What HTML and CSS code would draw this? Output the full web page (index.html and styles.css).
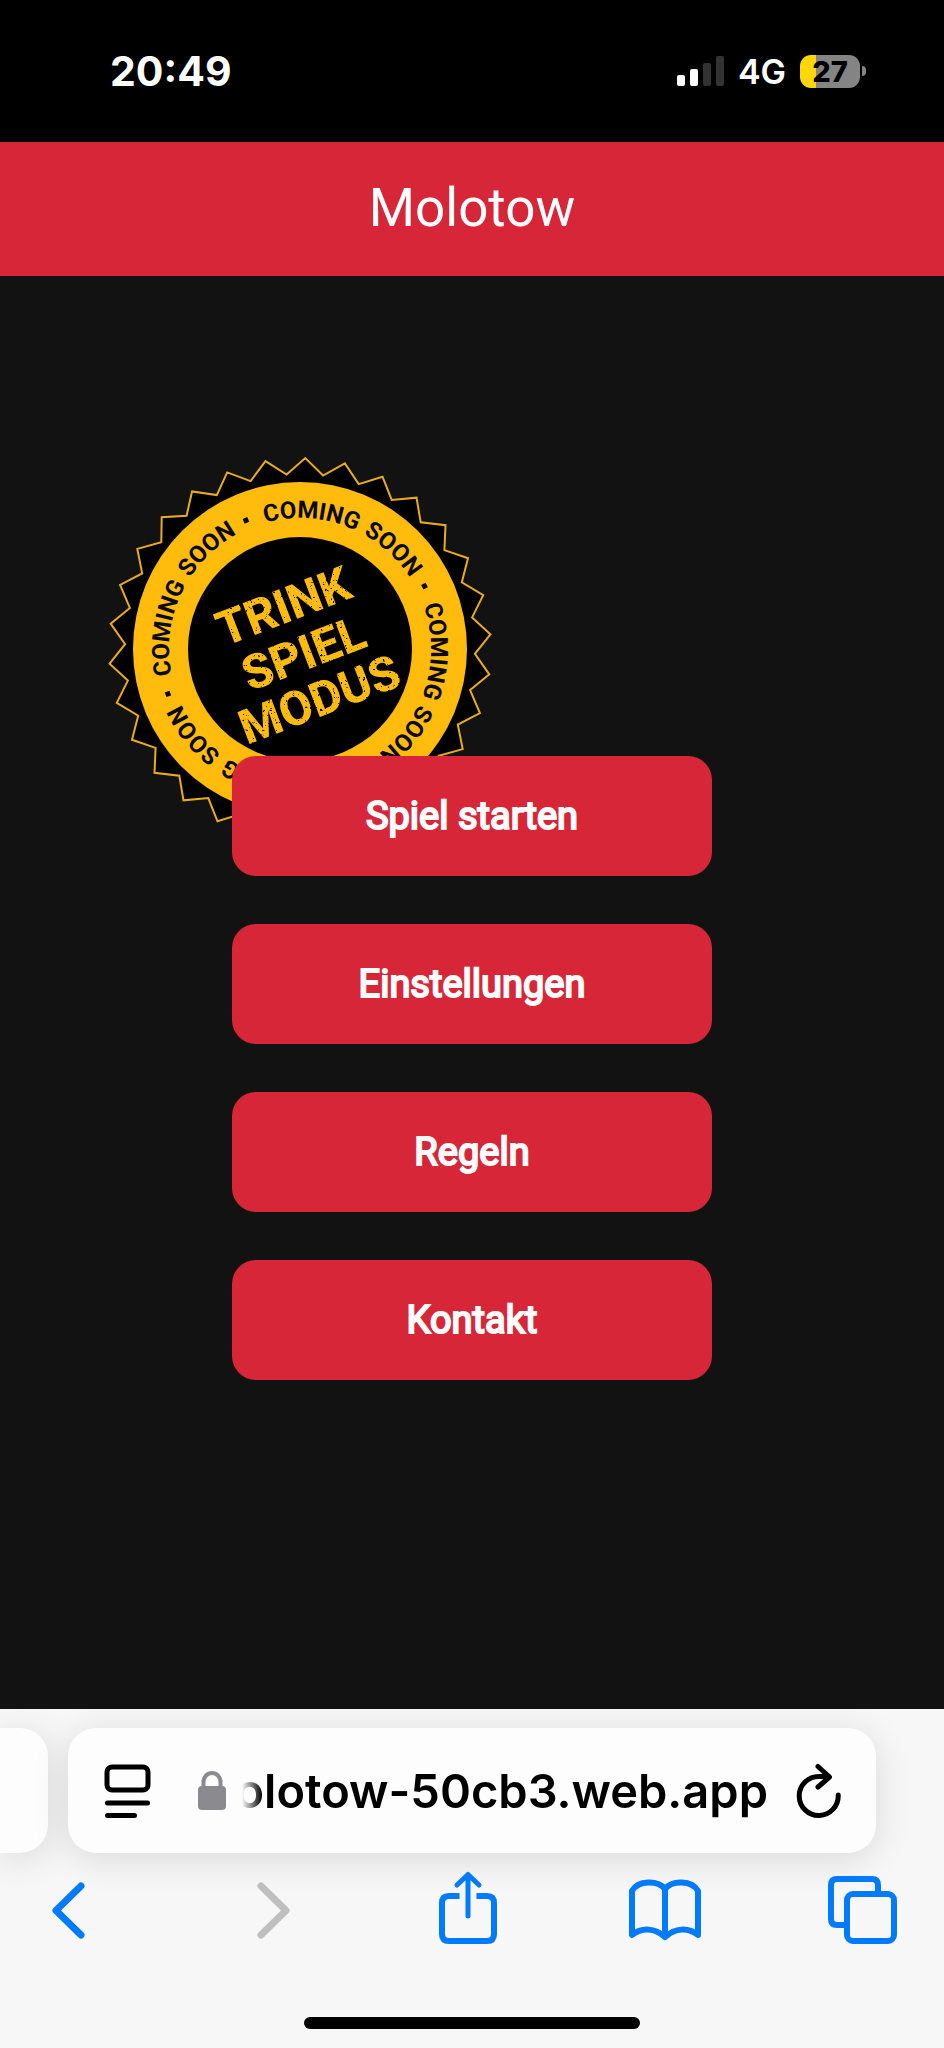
FILE: index.html
```html
<!DOCTYPE html>
<html lang="de">
<head>
<meta charset="utf-8">
<meta name="viewport" content="width=device-width, initial-scale=1">
<title>Molotow</title>
<link rel="stylesheet" href="styles.css">
</head>
<body>
<div class="phone">
  <div class="status">
    <time class="status-time">20:49</time>
    <div class="status-right">
      <svg class="signal" viewBox="0 0 48 32" aria-hidden="true">
        <rect x="1" y="20" width="8" height="11" rx="2" fill="#fff"/>
        <rect x="14" y="14" width="8" height="17" rx="2" fill="#fff"/>
        <rect x="27" y="8" width="8" height="23" rx="2" fill="#333"/>
        <rect x="40" y="1" width="8" height="30" rx="2" fill="#333"/>
      </svg>
      <span class="network">4G</span>
      <span class="battery"><span class="battery-level">27</span></span>
    </div>
  </div>

  <header class="app-header"><h1 class="app-title">Molotow</h1></header>

  <main class="app-main">
    <svg class="badge" viewBox="0 0 384 384" role="img" aria-label="Trinkspielmodus coming soon">
      <defs>
        <path id="ring" d="M192 61 a131 131 0 0 1 0 262 a131 131 0 0 1 0 -262"/>
        <filter id="worn" x="-5%" y="-5%" width="110%" height="110%">
          <feTurbulence type="fractalNoise" baseFrequency="0.4" numOctaves="2" seed="7" result="noise"/>
          <feColorMatrix in="noise" type="matrix" values="0 0 0 0 0  0 0 0 0 0  0 0 0 0 0  -12 0 0 0 9" result="holes"/>
          <feComposite in="SourceGraphic" in2="holes" operator="in"/>
        </filter>
      </defs>
      <polygon id="seal" class="badge-seal"/>
      <circle class="badge-ring" cx="192" cy="192" r="167"/>
      <circle cx="192" cy="192" r="112"/>
      <g id="ring-text" class="badge-ring-text"></g>
      <g class="badge-words" filter="url(#worn)">
        <text transform="translate(175 148) rotate(-21)" y="18">TRINK</text>
        <text transform="translate(195 195) rotate(-21)" y="18">SPIEL</text>
        <text transform="translate(211 241) rotate(-21)" y="18">MODUS</text>
      </g>
    </svg>
    <nav class="menu">
      <button class="menu-button" type="button">Spiel starten</button>
      <button class="menu-button" type="button">Einstellungen</button>
      <button class="menu-button" type="button">Regeln</button>
      <button class="menu-button" type="button">Kontakt</button>
    </nav>
  </main>

  <footer class="browser">
    <div class="tabs">
      <div class="tab-previous"></div>
      <div class="address">
        <button class="icon-button" type="button" aria-label="Seitenmenü">
          <svg width="48" height="56" viewBox="0 0 48 56" class="line-icon">
            <rect x="3" y="4" width="41" height="23" rx="5"/>
            <path d="M3.500 40H43.500M3.500 52.500H30.500"/>
          </svg>
        </button>
        <svg class="lock" width="28" height="40" viewBox="0 0 28 40" aria-hidden="true">
          <rect y="15" width="28" height="24" rx="4" fill="#8a8a8f"/>
          <path d="M5.500 17V11a8.500 9 0 0 1 17 0v6" fill="none" stroke="#8a8a8f" stroke-width="4"/>
        </svg>
        <button class="url" type="button"><span>molotow-50cb3.web.app</span></button>
        <button class="icon-button" type="button" aria-label="Neu laden">
          <svg width="48" height="56" viewBox="0 0 48 56" class="line-icon">
            <path d="M42.200 32A19.500 19.500 0 1 1 22.700 13.500H33M22 3.500L33.500 14L22 24"/>
          </svg>
        </button>
      </div>
    </div>
    <div class="toolbar">
      <button class="icon-button" type="button" aria-label="Zurück"><svg width="72" height="80" viewBox="0 0 72 80" class="tool-icon"><path d="M49 18L24 42.500L49 67" stroke-width="7"/></svg></button>
      <button class="icon-button" type="button" aria-label="Vorwärts" disabled><svg width="72" height="80" viewBox="0 0 72 80" class="tool-icon tool-icon-off"><path d="M30 18L55 42.500L30 67" stroke-width="7"/></svg></button>
      <button class="icon-button" type="button" aria-label="Teilen"><svg width="72" height="80" viewBox="0 0 72 80" class="tool-icon"><path stroke-linecap="butt" d="M29.500 28H19Q12 28 12 35V66Q12 73 19 73H57Q64 73 64 66V35Q64 28 57 28H46.500"/><path d="M38 7V48M27 17L38 6.500L49 17" stroke-width="5"/></svg></button>
      <button class="icon-button" type="button" aria-label="Lesezeichen"><svg width="72" height="80" viewBox="0 0 72 80" class="tool-icon"><path d="M4 23C10 12 30 12 37 21C44 12 64 12 70 23V67C60 59 47 60 37 69C27 60 14 59 4 67ZM37 21V69"/></svg></button>
      <button class="icon-button" type="button" aria-label="Tabs"><svg width="72" height="80" viewBox="0 0 72 80" class="tool-icon"><rect x="20" y="26" width="47" height="47" rx="6"/><path stroke-linecap="butt" d="M51 23V17Q51 11 45 11H10Q4 11 4 17V51Q4 57 10 57H17"/></svg></button>
    </div>
    <div class="home-bar"></div>
  </footer>
</div>
<script src="badge.js"></script>
</body>
</html>
```

FILE: styles.css
```css
* { box-sizing: border-box; }

body {
  margin: 0;
  background: #121212;
  font-family: Inter, "Liberation Sans", sans-serif;
}

button {
  padding: 0;
  border: 0;
  background: none;
  font: inherit;
  color: inherit;
}

.phone {
  display: flex;
  flex-direction: column;
  min-height: 100vh;
}

.status {
  display: flex;
  align-items: center;
  justify-content: space-between;
  height: 142px;
  padding: 0 78px 0 110px;
  background: #000;
  color: #fff;
}

.status-time { font-size: 41px; font-weight: 700; }

.status-right { display: flex; align-items: center; gap: 14px; }

.signal { width: 48px; height: 32px; }

.network { font-size: 34px; font-weight: 600; }

.battery { display: flex; align-items: center; gap: 2px; }

.battery-level {
  width: 60px;
  border-radius: 11px;
  background: linear-gradient(90deg, #ffd60a 27%, #848484 27%);
  color: #000;
  font-size: 29px;
  font-weight: 800;
  line-height: 33px;
  text-align: center;
}

.battery::after {
  content: "";
  width: 4px;
  height: 10px;
  border-radius: 0 5px 5px 0;
  background: #848484;
}

.app-header {
  display: flex;
  align-items: center;
  justify-content: center;
  height: 134px;
  padding-bottom: 2px;
  background: #d72638;
  color: #fff;
  font-family: Roboto, sans-serif;
}

.app-title { margin: 0; font-size: 53px; font-weight: 400; }

.app-main {
  position: relative;
  flex: 1;
  padding: 480px 24px 48px;
  background: #121212;
}

.badge {
  position: absolute;
  top: 181px;
  left: 108px;
  width: 384px;
}

.badge-seal { fill: #000; stroke: #e9ac1c; stroke-width: 2; }
.badge-ring { fill: #ffbc0d; }

.badge-ring-text {
  fill: #0c0903;
  font-family: Roboto, sans-serif;
  font-size: 24px;
  font-weight: 700;
}

.badge-words {
  fill: #ffbc0d;
  font-family: Roboto, sans-serif;
  font-size: 48px;
  font-weight: 800;
  text-anchor: middle;
}

.menu {
  position: relative;
  display: flex;
  flex-direction: column;
  gap: 48px;
  width: 100%;
  max-width: 480px;
  margin: 0 auto;
}

.menu-button {
  height: 120px;
  border-radius: 24px;
  background: #d72638;
  color: #fff;
  font-family: Roboto, sans-serif;
  font-size: 38px;
  font-weight: 400;
  -webkit-text-stroke: 2px #fff;
}

.browser {
  padding-top: 19px;
  padding-bottom: 19px;
  background: #f7f7f7;
}

.tabs { display: flex; gap: 20px; padding-right: 68px; }

.tab-previous, .address {
  height: 125px;
  background: #fdfdfd;
  box-shadow: 0 6px 36px rgba(0, 0, 0, 0.12);
}

.tab-previous { width: 48px; border-radius: 0 28px 28px 0; }

.address {
  display: flex;
  flex: 1;
  align-items: center;
  min-width: 0;
  padding: 0 32px 0 36px;
  border-radius: 28px;
}

.icon-button { display: flex; flex: none; }

.line-icon {
  fill: none;
  stroke: #000;
  stroke-width: 5;
  stroke-linecap: round;
  stroke-linejoin: round;
}

.lock { flex: none; margin: 0 16px 0 46px; }

.url {
  display: flex;
  flex: 1;
  justify-content: flex-end;
  min-width: 0;
  margin-right: 28px;
  overflow: hidden;
  color: #000;
  font-size: 47px;
  font-weight: 600;
  line-height: 64px;
  white-space: nowrap;
  -webkit-mask-image: linear-gradient(90deg, transparent, #000 20px);
  mask-image: linear-gradient(90deg, transparent, #000 20px);
}

.toolbar {
  position: relative;
  display: flex;
  justify-content: space-between;
  padding: 15px 45px 0 32px;
}

.tool-icon {
  overflow: visible;
  fill: none;
  stroke: #007aff;
  stroke-width: 6;
  stroke-linecap: round;
  stroke-linejoin: round;
}

.tool-icon-off { stroke: #bfbfbf; }

.home-bar {
  width: 336px;
  height: 12px;
  margin: 69px auto 0;
  border-radius: 6px;
  background: #000;
}
```

FILE: badge.js
```js
const SVG_NS = "http://www.w3.org/2000/svg";
const TEETH = 30;
const CENTER = 192;

// Serrated outline: outer tips alternate with inner notches.
const points = [];
for (let i = 0; i < TEETH * 2; i++) {
  const radius = i % 2 ? 175 : 191;
  const angle = (1.6 + i * 180 / TEETH) * Math.PI / 180;
  points.push((CENTER + radius * Math.sin(angle)).toFixed(1) + "," +
    (CENTER - radius * Math.cos(angle)).toFixed(1));
}
document.getElementById("seal").setAttribute("points", points.join(" "));

// Each repeat of the phrase starts with a square dot on the ring.
const ringText = document.getElementById("ring-text");
for (const turn of [-109, -23, 63, 165]) {
  const dot = document.createElementNS(SVG_NS, "rect");
  dot.setAttribute("x", CENTER - 2);
  dot.setAttribute("y", 50);
  dot.setAttribute("width", 5);
  dot.setAttribute("height", 5);
  dot.setAttribute("transform", `rotate(${turn} ${CENTER} ${CENTER})`);
  ringText.append(dot);

  for (const [word, at] of [["COMING", 28], ["SOON", 66]]) {
    const text = document.createElementNS(SVG_NS, "text");
    const path = document.createElementNS(SVG_NS, "textPath");
    text.setAttribute("transform", `rotate(${turn + at - 180} ${CENTER} ${CENTER})`);
    text.setAttribute("text-anchor", "middle");
    path.setAttribute("href", "#ring");
    path.setAttribute("startOffset", "50%");
    path.textContent = word;
    text.append(path);
    ringText.append(text);
  }
}
```
